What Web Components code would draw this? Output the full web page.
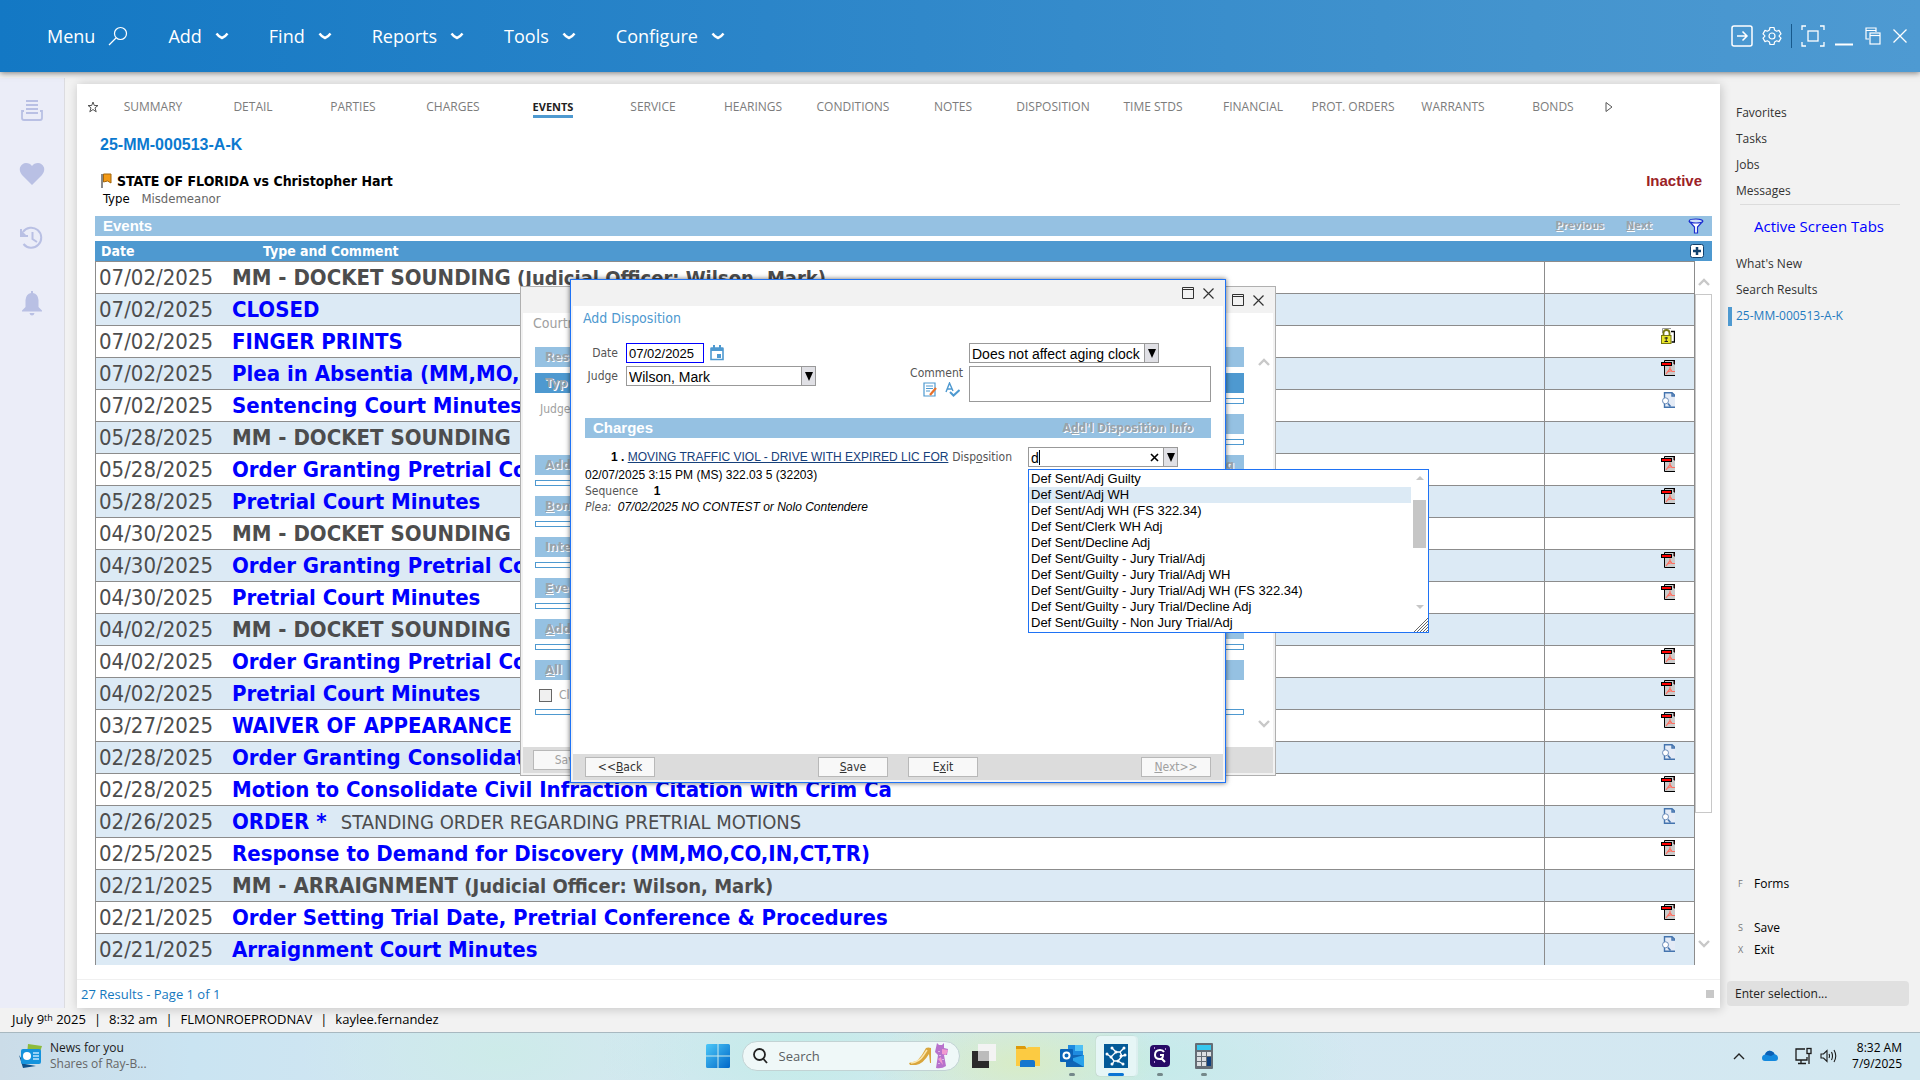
<!DOCTYPE html>
<html lang="en">
<head>
<meta charset="utf-8">
<title>25-MM-000513-A-K</title>
<style>
  :root {
    --blue: #4e99d0;
    --blue-light: #95c1e2;
    --row-alt: #dceaf5;
    --line: #8c8c8c;
    --ui: "Open Sans", "Noto Sans", sans-serif;
    --tahoma: "DejaVu Sans Condensed", "Noto Sans", sans-serif;
    --arial: "Liberation Sans", Arial, sans-serif;
  }
  html, body { height: 100%; margin: 0; }
  body { font-family: var(--ui); font-size: 12px; overflow: hidden; }
</style>
</head>
<body>
<court-app>
  <app-header slot="header"></app-header>
  <app-rail slot="rail"></app-rail>
  <case-panel slot="main" case-number="25-MM-000513-A-K" status="Inactive">
    <case-tabs slot="tabs" active="EVENTS"></case-tabs>
    <span slot="style">STATE OF FLORIDA vs Christopher Hart</span>
    <span slot="type">Misdemeanor</span>
    <events-table></events-table>
    <span slot="results">27 Results - Page 1 of 1</span>
  </case-panel>
  <side-nav slot="side"></side-nav>
  <status-bar slot="status"></status-bar>
  <task-bar slot="taskbar"></task-bar>
  <dialog-window slot="windows" class="minutes" inactive>
    <minutes-form></minutes-form>
    <action-button slot="actions" disabled>Save</action-button>
  </dialog-window>
  <dialog-window slot="windows" class="disposition">
    <disposition-form></disposition-form>
    <action-button slot="actions">&lt;&lt;<u>B</u>ack</action-button>
    <action-button slot="actions" class="save"><u>S</u>ave</action-button>
    <action-button slot="actions" class="exit">E<u>x</u>it</action-button>
    <action-button slot="actions" class="next" disabled><u>N</u>ext&gt;&gt;</action-button>
  </dialog-window>
</court-app>

<script>
/* Small base: every element sets its shadow root from a html() string */
class BaseElement extends HTMLElement {
  constructor() {
    super();
    this.attachShadow({ mode: 'open' });
  }

  connectedCallback() {
    this.shadowRoot.innerHTML = this.html();
  }
}

/* Page shell: header, three columns, status bar, taskbar, floating windows */
class CourtApp extends BaseElement {
  html() {
    return `
      <style>
        :host {
          display: flex;
          flex-direction: column;
          position: relative;
          height: 100vh;
          background: #f2f2f2;
        }
        .body {
          flex: 1;
          min-height: 0;
          display: grid;
          grid-template: minmax(0, 1fr) / 65px minmax(0, 1fr) 200px;
        }
        ::slotted(dialog-window) { position: absolute; }
        ::slotted(.minutes) { left: 520px; top: 286px; width: 756px; height: 490px; }
        ::slotted(.disposition) { left: 570px; top: 279px; width: 656px; height: 504px; }
      </style>
      <slot name="header"></slot>
      <div class="body">
        <slot name="rail"></slot>
        <slot name="main"></slot>
        <slot name="side"></slot>
      </div>
      <slot name="status"></slot>
      <slot name="taskbar"></slot>
      <slot name="windows"></slot>
    `;
  }
}

class AppHeader extends BaseElement {
  html() {
    const caret = '<svg width="14" height="8" viewBox="0 0 14 8"><path d="M1.500 1.500Q4 5 7 6Q10 5 12.500 1.500" fill="none" stroke="#fff" stroke-width="2.400"/></svg>';
    const items = ['Add', 'Find', 'Reports', 'Tools', 'Configure'];
    return `
      <style>
        :host {
          display: flex;
          align-items: center;
          justify-content: space-between;
          height: 72px;
          flex: none;
          padding: 0 12px 0 47px;
          background: linear-gradient(90deg, #1378c4, #2b85c9 40%, #4494ce 80%, #4e9ad2);
          box-shadow: 0 1px 6px rgba(0, 0, 0, .5);
          z-index: 1;
        }
        nav { display: flex; gap: 40px; }
        button {
          display: flex;
          align-items: center;
          padding: 0;
          border: 0;
          background: none;
          color: #fff;
          font: 18px/24px var(--ui);
        }
        nav button { gap: 13px; }
        .tools { display: flex; align-items: center; gap: 9px; }
        .tools i { width: 1px; height: 24px; background: #17598c; }
        svg { display: block; fill: none; stroke: #fff; }
      </style>
      <nav>
        <button>Menu
          <svg width="20" height="20" viewBox="0 0 20 20"><circle cx="12.500" cy="7.500" r="6" stroke-width="1.200"/><path d="M8 12L1 19" stroke-width="1.300"/></svg>
        </button>
        ${items.map(name => `<button>${name}${caret}</button>`).join('')}
      </nav>
      <div class="tools">
        <button aria-label="Open"><svg width="22" height="22" viewBox="0 0 22 22"><rect x="1" y="1" width="20" height="20" rx="2" stroke-width="1.500"/><path d="M6 11H16M11.500 6.500L16 11L11.500 15.500" stroke-width="1.500"/></svg></button>
        <button aria-label="Settings"><svg width="20" height="20" viewBox="0 0 20 20" stroke-width="1.200"><path d="M8 1.500H12L12.600 4L14.600 5.200L17 4.400L19 7.900L17.200 9.600V10.400L19 12.100L17 15.600L14.600 14.800L12.600 16L12 18.500H8L7.400 16L5.400 14.800L3 15.600L1 12.100L2.800 10.400V9.600L1 7.900L3 4.400L5.400 5.200L7.400 4Z" stroke-linejoin="round"/><circle cx="10" cy="10" r="3"/></svg></button>
        <i></i>
        <button aria-label="Full screen"><svg width="24" height="22" viewBox="0 0 24 22"><path d="M1 5V1H5M19 1H23V5M23 17V21H19M5 21H1V17" stroke-width="1.300"/><rect x="7" y="6" width="10" height="10" stroke-width="1.300"/></svg></button>
        <button aria-label="Minimize"><svg width="20" height="20" viewBox="0 0 20 20"><path d="M1 18.500H19" stroke-width="2"/></svg></button>
        <button aria-label="Restore"><svg width="20" height="18" viewBox="0 0 20 18" stroke-width="1.200"><path d="M6 12H3V1H13V5M3 3.500H13"/><rect x="7" y="6" width="10" height="11"/><path d="M7 8.500H17"/></svg></button>
        <button aria-label="Close"><svg width="16" height="16" viewBox="0 0 16 16"><path d="M1.500 1.500L14.500 14.500M14.500 1.500L1.500 14.500" stroke-width="1.300"/></svg></button>
      </div>
    `;
  }
}

class AppRail extends BaseElement {
  html() {
    return `
      <style>
        :host {
          display: flex;
          flex-direction: column;
          align-items: center;
          gap: 40px;
          box-sizing: border-box;
          margin-top: 6px;
          padding-top: 20px;
          background: #ebedf8;
          border-right: 1px solid #dcdce0;
        }
        button { padding: 0; border: 0; background: none; color: #b9c0e4; }
        svg { display: block; }
      </style>
      <button aria-label="Queue"><svg width="24" height="24" viewBox="0 0 24 24" fill="none" stroke="currentColor" stroke-width="2"><path d="M6 3H18M6 7H18M6 11H18M6 15H18"/><path d="M4 13H2V20Q2 22 4 22H20Q22 22 22 20V13H20" stroke-width="1.800"/></svg></button>
      <button aria-label="Favorites"><svg width="26" height="24" viewBox="0 0 26 24"><path d="M13 23L3 13Q0 9 1 5.500Q3 1 7 1Q11 1 13 4Q15 1 19 1Q23 1 25 5.500Q26 9 23 13Z" fill="currentColor"/></svg></button>
      <button aria-label="History"><svg width="26" height="24" viewBox="0 0 26 24" fill="none" stroke="currentColor" stroke-width="2"><path d="M4 6A10 10 0 1 1 4.500 18M2 3V10H9M13.500 6V13L18 16"/><path d="M1 3V10H8Z" fill="currentColor" stroke="none"/></svg></button>
      <button aria-label="Alerts"><svg width="24" height="26" viewBox="0 0 24 26" fill="currentColor"><path d="M11 1H13V3Q18 4 18.500 10V17L22 20.500V21.500H2V20.500L5.500 17V10Q6 4 11 3ZM9.500 23H14.500Q14 25.500 12 25.500Q10 25.500 9.500 23Z"/></svg></button>
    `;
  }
}

/* White case sheet: tabs, caption, slotted content and result count */
class CasePanel extends BaseElement {
  html() {
    return `
      <style>
        :host {
          display: flex;
          flex-direction: column;
          min-width: 0;
          margin: 12px 0 0 12px;
          background: #fff;
          box-shadow: 1px 1px 10px rgba(0, 0, 0, .2);
        }
        .number { margin: 4px 0 0 23px; font: bold 16px/24px var(--arial); }
        .number a { color: #0b79cf; text-decoration: none; }
        .caption {
          display: flex;
          justify-content: space-between;
          align-items: center;
          padding: 15px 18px 0 23px;
        }
        h1 { display: flex; align-items: center; gap: 5px; margin: 0; font: bold 14px/18px var(--tahoma); }
        .status { color: #9b2226; font: bold 15px/18px var(--arial); }
        .type { padding: 0 26px 9px; font: 13px/17px var(--tahoma); }
        .type ::slotted(span) { margin-left: 8px; color: #666; }
        .content { flex: 1; min-height: 0; display: flex; padding: 0 8px 0 18px; }
        ::slotted(events-table) { flex: 1; min-width: 0; }
        footer {
          display: flex;
          align-items: center;
          justify-content: space-between;
          height: 28px;
          margin-top: 13px;
          padding: 0 6px 0 4px;
          border-top: 1px solid #f0f0f0;
          color: #1478be;
          font-size: 13px;
        }
        footer i { width: 8px; height: 8px; background: #c8c8c8; }
      </style>
      <slot name="tabs"></slot>
      <div class="number"><a href="#case">${this.getAttribute('case-number')}</a></div>
      <div class="caption">
        <h1>
          <svg width="12" height="16" viewBox="0 0 12 16"><path d="M2 1V15" stroke="#888" stroke-width="2"/><path d="M3.500 1H11V10L7.500 8L3.500 9Z" fill="#f39a16" stroke="#a4660c"/></svg>
          <slot name="style"></slot>
        </h1>
        <span class="status">${this.getAttribute('status')}</span>
      </div>
      <div class="type">Type <slot name="type"></slot></div>
      <div class="content"><slot></slot></div>
      <footer><slot name="results"></slot><i></i></footer>
    `;
  }
}

class CaseTabs extends BaseElement {
  html() {
    const tabs = ['SUMMARY', 'DETAIL', 'PARTIES', 'CHARGES', 'EVENTS', 'SERVICE', 'HEARINGS', 'CONDITIONS',
      'NOTES', 'DISPOSITION', 'TIME STDS', 'FINANCIAL', 'PROT. ORDERS', 'WARRANTS', 'BONDS'];
    const active = this.getAttribute('active');
    return `
      <style>
        :host { display: flex; align-items: center; height: 45px; padding-left: 10px; }
        nav { display: flex; margin: 0 2px 0 4px; }
        nav span { width: 100px; text-align: center; }
        a { color: #7c7c7c; text-decoration: none; font: 12px/16px var(--ui); white-space: nowrap; }
        a.active { padding-bottom: 1px; color: #222; font-weight: bold; font-size: 11px; border-bottom: 3px solid var(--blue); }
        svg { display: block; fill: none; stroke: #555; }
      </style>
      <svg width="12" height="12" viewBox="0 0 12 12"><path d="M6 1L7.300 4.500H11L8 6.800L9.200 10.800L6 8.500L2.800 10.800L4 6.800L1 4.500H4.700Z"/></svg>
      <nav>
        ${tabs.map(t => `<span><a href="#${t.toLowerCase()}"${t === active ? ' class="active"' : ''}>${t}</a></span>`).join('')}
      </nav>
      <svg width="8" height="12" viewBox="0 0 8 12"><path d="M1 1.500L7 6L1 10.500Z"/></svg>
    `;
  }
}

const FILE_ICONS = {
  pdf: '<svg width="14" height="16" viewBox="0 0 14 16"><path d="M3.500 .5H14V15.500H3.500Z" fill="#cbcbcb"/><path d="M14 .5H3.500V15.500H14" fill="none" stroke="#000"/><path d="M13 1V4H14V1Z" fill="#f00" stroke="#000"/><rect x=".5" y="2.500" width="10" height="3" fill="#f00" stroke="#000"/><path d="M5 14L9 8.500V6.500M9 8.500L11 11.500H14M6.500 12L11 10.500" fill="none" stroke="#ff6f61" stroke-width="1.200"/></svg>',
  doc: '<svg width="14" height="16" viewBox="0 0 14 16"><path d="M3.500 .7H11L14 3.500V15.300H3.500Z" fill="#e4ebf6"/><path d="M3.500 6V.7H11L14 3.500M3.500 11V15.300H14M11 .7V4H14" fill="none" stroke="#4474ae" stroke-width="1.400"/><circle cx="4.500" cy="8.800" r="3" fill="#fff" stroke="#6f8fba"/><path d="M7 11.500L9.500 14.500" stroke="#4474ae" stroke-width="1.600"/></svg>',
  lock: '<svg width="14" height="16" viewBox="0 0 14 16"><path d="M2 1H11L13.500 3.500V14H9" fill="#fff"/><path d="M1.500 5V.5H10" fill="none" stroke="#999"/><path d="M10 3.500H13.500V14H10.500" fill="none" stroke="#000" stroke-width="1.400"/><path d="M2.500 7V5Q2.500 2 5.500 2Q8.500 2 8.500 5V7" fill="none" stroke="#77770f" stroke-width="1.800"/><rect x=".5" y="7.500" width="9.500" height="8" fill="#e8e52a" stroke="#77770f"/><path d="M5.200 9V14M3.500 10H7M3.500 13.500H7" stroke="#222"/></svg>'
};

const OFFICER = '(Judicial Officer: Wilson, Mark)';

/* date, title, kind, file icon, trailing comment */
const EVENTS = [
  ['07/02/2025', 'MM - DOCKET SOUNDING', 'hearing', '', OFFICER],
  ['07/02/2025', 'CLOSED', 'event', ''],
  ['07/02/2025', 'FINGER PRINTS', 'event', 'lock'],
  ['07/02/2025', 'Plea in Absentia (MM,MO,C', 'event', 'pdf'],
  ['07/02/2025', 'Sentencing Court Minutes', 'event', 'doc'],
  ['05/28/2025', 'MM - DOCKET SOUNDING', 'hearing', ''],
  ['05/28/2025', 'Order Granting Pretrial Co', 'event', 'pdf'],
  ['05/28/2025', 'Pretrial Court Minutes', 'event', 'pdf'],
  ['04/30/2025', 'MM - DOCKET SOUNDING', 'hearing', ''],
  ['04/30/2025', 'Order Granting Pretrial Co', 'event', 'pdf'],
  ['04/30/2025', 'Pretrial Court Minutes', 'event', 'pdf'],
  ['04/02/2025', 'MM - DOCKET SOUNDING', 'hearing', ''],
  ['04/02/2025', 'Order Granting Pretrial Co', 'event', 'pdf'],
  ['04/02/2025', 'Pretrial Court Minutes', 'event', 'pdf'],
  ['03/27/2025', 'WAIVER OF APPEARANCE', 'event', 'pdf'],
  ['02/28/2025', 'Order Granting Consolidat', 'event', 'doc'],
  ['02/28/2025', 'Motion to Consolidate Civil Infraction Citation with Crim Ca', 'event', 'pdf'],
  ['02/26/2025', 'ORDER *', 'event', 'doc', 'STANDING ORDER REGARDING PRETRIAL MOTIONS'],
  ['02/25/2025', 'Response to Demand for Discovery (MM,MO,CO,IN,CT,TR)', 'event', 'pdf'],
  ['02/21/2025', 'MM - ARRAIGNMENT', 'hearing', '', OFFICER],
  ['02/21/2025', 'Order Setting Trial Date, Pretrial Conference &amp; Procedures', 'event', 'pdf'],
  ['02/21/2025', 'Arraignment Court Minutes', 'event', 'doc']
];

class EventsTable extends BaseElement {
  _row([date, title, kind, icon, note]) {
    const name = kind === 'event' ? `<a href="#event">${title}</a>` : `<b>${title}</b>`;
    return `
      <tr class="${kind}">
        <td class="date">${date}</td>
        <td class="title">${name}${note ? ` <span class="note">${note}</span>` : ''}</td>
        <td class="file">${FILE_ICONS[icon] || ''}</td>
      </tr>`;
  }

  html() {
    return `
      <style>
        :host { display: flex; flex-direction: column; }
        .bar, .head {
          display: flex;
          align-items: center;
          height: 20px;
          flex: none;
          color: #fff;
        }
        .bar { padding: 0 8px; background: var(--blue-light); margin-bottom: 5px; }
        h2 { flex: 1; margin: 0; font: bold 15px/20px var(--arial); }
        .bar button {
          padding: 0;
          border: 0;
          background: none;
          color: #9aa3ab;
          font: bold 11px/20px var(--tahoma);
          text-shadow: 1px 1px #fff;
        }
        .bar button + button { margin-left: 22px; }
        .bar button.filter { margin-left: 36px; }
        .head { padding: 0 8px 0 6px; background: var(--blue); font: bold 14px/20px var(--tahoma); }
        .head span:first-child { width: 162px; }
        .head span:nth-child(2) { flex: 1; }
        .head button { padding: 0; border: 0; background: none; }
        svg { display: block; }
        .scroll { flex: 1; min-height: 0; display: flex; overflow: hidden; }
        .rows { flex: 1; overflow: hidden; }
        table {
          width: 100%;
          border-collapse: separate;
          border-spacing: 0;
          border: 1px solid var(--line);
          border-width: 0 1px;
          table-layout: fixed;
          font: 22px/26px var(--tahoma);
          color: #4d4d4d;
        }
        td {
          box-sizing: border-box;
          height: 32px;
          padding: 0;
          border-top: 1px solid var(--line);
          white-space: nowrap;
          overflow: hidden;
        }
        tr:nth-child(even) { background: var(--row-alt); }
        .date { width: 136px; padding-left: 3px; }
        .title a { color: #00f; font-weight: bold; text-decoration: none; }
        .note { font-size: 20px; font-weight: bold; }
        .event .note { margin-left: 8px; font-weight: normal; }
        .file { width: 150px; padding-right: 19px; border-left: 1px solid var(--line); vertical-align: top; }
        .file svg { margin: 2px 0 0 auto; }
        .track { width: 17px; flex: none; display: flex; flex-direction: column; align-items: center; }
        .track svg { margin: 17px 0 8px; }
        .thumb { box-sizing: border-box; width: 17px; height: 519px; border: 1px solid #c8c8c8; background: #fff; }
        .track svg:last-child { margin: auto 0 18px; }
      </style>
      <div class="bar">
        <h2>Events</h2>
        <button disabled><u>P</u>revious</button>
        <button disabled><u>N</u>ext</button>
        <button class="filter" aria-label="Filter"><svg width="16" height="16" viewBox="0 0 16 16"><path d="M1 3L6.500 9V15H9.500V9L15 3" fill="#fff" stroke="#1c2fd0" stroke-width="1.200"/><ellipse cx="8" cy="3" rx="6.800" ry="2" fill="#cfe0f8" stroke="#1c2fd0" stroke-width="1.200"/></svg></button>
      </div>
      <div class="head">
        <span>Date</span><span>Type and Comment</span>
        <button aria-label="Add event"><svg width="14" height="14" viewBox="0 0 14 14"><rect x=".5" y=".5" width="13" height="13" rx="2" fill="#fff" stroke="#11416d"/><path d="M7 3V11M3 7H11" stroke="#11416d" stroke-width="2.500"/></svg></button>
      </div>
      <div class="scroll">
        <div class="rows"><table><tbody>${EVENTS.map(e => this._row(e)).join('')}</tbody></table></div>
        <div class="track">
          <svg width="12" height="8" viewBox="0 0 12 8"><path d="M1 7L6 2L11 7" fill="none" stroke="#c8c8c8" stroke-width="2.400"/></svg>
          <div class="thumb"></div>
          <svg width="12" height="8" viewBox="0 0 12 8"><path d="M1 1L6 6L11 1" fill="none" stroke="#c8c8c8" stroke-width="2.400"/></svg>
        </div>
      </div>
    `;
  }
}

class SideNav extends BaseElement {
  html() {
    return `
      <style>
        :host { display: flex; flex-direction: column; min-width: 0; padding: 28px 11px 2px 7px; font-size: 12px; }
        a { color: #333; text-decoration: none; line-height: 26px; padding-left: 9px; }
        nav { display: flex; flex-direction: column; }
        hr { width: 160px; margin: 0 0 0 13px; border: 0; border-top: 1px solid #dcdcdc; }
        h3 { margin: 8px 0 12px 27px; color: #00f; font: 15px/26px var(--ui); }
        .current { display: flex; align-items: center; gap: 4px; padding-left: 1px; color: #1f7ac0; }
        .current i { width: 4px; height: 19px; background: var(--blue); }
        .keys { margin-top: auto; color: #000; }
        .keys a { display: flex; line-height: 22px; color: #000; padding-left: 11px; }
        .keys kbd { width: 16px; color: #777; font: 9px/22px var(--ui); }
        .keys a:first-child { margin-bottom: 22px; }
        input {
          box-sizing: border-box;
          width: 100%;
          height: 25px;
          margin-top: 20px;
          padding: 0 8px;
          border: 0;
          border-radius: 4px;
          background: #e0e0e0;
          font: 12px var(--ui);
        }
        input::placeholder { color: #222; opacity: 1; }
      </style>
      <nav>
        <a href="#favorites">Favorites</a>
        <a href="#tasks">Tasks</a>
        <a href="#jobs">Jobs</a>
        <a href="#messages">Messages</a>
      </nav>
      <hr>
      <h3>Active Screen Tabs</h3>
      <nav>
        <a href="#new">What's New</a>
        <a href="#results">Search Results</a>
        <a href="#case" class="current"><i></i>25-MM-000513-A-K</a>
      </nav>
      <div class="keys">
        <a href="#forms"><kbd>F</kbd>Forms</a>
        <a href="#save"><kbd>S</kbd>Save</a>
        <a href="#exit"><kbd>X</kbd>Exit</a>
      </div>
      <input type="text" aria-label="Enter selection" placeholder="Enter selection...">
    `;
  }
}

class StatusBar extends BaseElement {
  html() {
    return `
      <style>
        :host {
          display: flex;
          align-items: center;
          flex: none;
          box-sizing: border-box;
          height: 24px;
          padding: 0 0 2px 12px;
          color: #000;
          font-size: 13px;
        }
        span { line-height: 22px; }
        span + span::before { content: "|"; margin: 0 8px; }
        sup { font-size: 9px; line-height: 1; vertical-align: 3px; }
      </style>
      <span>July 9<sup>th</sup> 2025</span><span>8:32 am</span><span>FLMONROEPRODNAV</span><span>kaylee.fernandez</span>
    `;
  }
}

class TaskBar extends BaseElement {
  html() {
    return `
      <style>
        :host {
          display: grid;
          grid-template-columns: 1fr auto 1fr;
          align-items: center;
          box-sizing: border-box;
          flex: none;
          height: 48px;
          padding: 0 18px 1px 19px;
          border-top: 1px solid #a8b8c0;
          background:
            radial-gradient(150px 60px at 1020px 30px, #d8ecc6, transparent),
            radial-gradient(200px 90px at 800px 20px, #c3ece8, transparent),
            radial-gradient(220px 90px at 1140px 30px, #c4ebe9, transparent),
            radial-gradient(200px 90px at 500px 20px, #cdebe9, transparent),
            linear-gradient(90deg, #cbdce8, #cae4f2 10%, #d5e7f2 30%, #d3e8f1);
        }
        svg { display: block; }
        button { padding: 0; border: 0; background: none; font: 12px/16px var(--ui); }
        .news { display: flex; align-items: center; gap: 8px; justify-self: start; text-align: left; color: #1b1b1b; }
        .news small { display: block; font-size: 12px; color: #666; }
        .apps { display: flex; align-items: center; gap: 4px; }
        .apps button { display: flex; justify-content: center; align-items: center; width: 40px; height: 40px; position: relative; border-radius: 4px; }
        .apps .running::after {
          content: "";
          position: absolute;
          bottom: 0;
          width: 6px;
          height: 3px;
          border-radius: 2px;
          background: #74888a;
        }
        .apps .active { background: #e6f6f6; box-shadow: 2px 0 0 #dcefef, 0 0 1px #999; }
        .apps .active::after { width: 16px; background: #0a74d4; }
        label {
          box-sizing: border-box;
          display: flex;
          align-items: center;
          width: 218px;
          height: 30px;
          padding: 0 10px;
          border: 1px solid #c2d3d4;
          border-radius: 15px;
          background: #eff8f8;
        }
        label input { flex: 1; min-width: 0; padding: 0 0 0 11px; border: 0; background: none; font: 13px var(--ui); }
        label input::placeholder { color: #5b6063; opacity: 1; }
        .tray { display: flex; align-items: center; justify-self: end; color: #1b1b1b; }
        .tray > * { margin-left: 8px; }
        .clock { min-width: 57px; text-align: right; }
      </style>
      <button class="news">
        <svg width="23" height="24" viewBox="0 0 23 24"><path d="M9 0L23 2L19 14L8 10Z" fill="#8dbb3c"/><path d="M0 11L6 20L17 22L4 24Z" fill="#0c4f8a"/><rect x="2" y="5" width="20" height="15" rx="2" fill="#1593dd"/><circle cx="8" cy="12" r="4" fill="#fff"/><path d="M14 9H20M14 12H20M14 15H20" stroke="#bfe6ff" stroke-width="1.500"/></svg>
        <span>News for you<small>Shares of Ray-B...</small></span>
      </button>
      <div class="apps">
        <button aria-label="Start"><svg width="24" height="24" viewBox="0 0 24 24"><defs><linearGradient id="w" x2="1" y2="1"><stop stop-color="#4cc8f8"/><stop offset="1" stop-color="#0067c8"/></linearGradient></defs><path d="M0 1.500Q0 0 1.500 0H11.500V11.500H0ZM12.500 0H22.500Q24 0 24 1.500V11.500H12.500ZM0 12.500H11.500V24H1.500Q0 24 0 22.500ZM12.500 12.500H24V22.500Q24 24 22.500 24H12.500Z" fill="url(#w)"/></svg></button>
        <label>
          <svg width="15" height="16" viewBox="0 0 15 16" fill="none" stroke="#222" stroke-width="1.800"><circle cx="6.500" cy="6.500" r="5.500"/><path d="M10.500 11L14 15"/></svg>
          <input type="text" aria-label="Search" placeholder="Search">
          <svg width="40" height="26" viewBox="0 0 40 26"><path d="M0 20Q4 19 8 18Q13 13 17 5Q19 4 22 5L22 20H21L20 11Q14 21 7 22H1Z" fill="#d9a63c"/><path d="M2 20Q10 19 14 13L18 7" fill="none" stroke="#fbe6ac" stroke-width="1.500"/><path d="M28 0L30 2H33L35 0L35 5L39 6L38 12L35 12L37 23Q33 26 27 25L29 12L26 9Z" fill="#b772cc"/><path d="M33 6L39 7L37 12L33 11ZM29 16L32 14L34 22Z" fill="#f09ad0"/><path d="M30 8V9M31 12V13M30 20V21M34 16V17" stroke="#fff"/></svg>
        </label>
        <button aria-label="Task view"><svg width="24" height="24" viewBox="0 0 24 24"><rect x="0" y="7" width="17" height="17" fill="#2a2a2a"/><rect x="6" y="0" width="18" height="17" fill="#f3f3f3"/><rect x="6" y="7" width="11" height="10" fill="#bcbcbc"/></svg></button>
        <button aria-label="File Explorer"><svg width="24" height="24" viewBox="0 0 24 24"><path d="M0 2H9L11 5V8H0Z" fill="#dd9a0a"/><path d="M0 5H10L12 3H24V22H0Z" fill="#fccb42"/><path d="M4 23V18Q4 16 6 16H17Q19 16 19 18V23Z" fill="#1577cf"/></svg></button>
        <button class="running" aria-label="Outlook"><svg width="24" height="24" viewBox="0 0 24 24"><path d="M8 1H23V12H8Z" fill="#1e8be0"/><path d="M15 1H23V7H15Z" fill="#4fc0f5"/><path d="M6 11L24 11V23H6Z" fill="#1066b6"/><path d="M24 11V23L10 15Z" fill="#2aa2ea"/><rect x="0" y="5" width="13" height="13" rx="1" fill="#0a63b8"/><circle cx="6.500" cy="11.500" r="3" fill="none" stroke="#fff" stroke-width="2"/></svg></button>
        <button class="running active" aria-label="Case manager"><svg width="24" height="24" viewBox="0 0 24 24"><rect width="24" height="24" fill="#035a97"/><g fill="none" stroke="#fff" stroke-width="1.300"><path d="M3 10L7 13L12 8L8 4M12 8L16 8L20 4M16 8L18 12L22 11M18 12L14 17L19 20M14 17L10 17L7 13M10 17L8 21"/></g><g fill="#fff"><circle cx="3" cy="10" r="1.500"/><circle cx="8" cy="4" r="1.500"/><circle cx="12" cy="8" r="1.500"/><circle cx="7" cy="13" r="1.500"/><circle cx="20" cy="4" r="1.500"/><circle cx="21" cy="11" r="1.500"/><circle cx="17" cy="12" r="1.500"/><circle cx="14" cy="17" r="1.500"/><circle cx="19" cy="20" r="1.500"/><circle cx="8" cy="20" r="1.500"/></g></svg></button>
        <button class="running" aria-label="Capture"><svg width="20" height="22" viewBox="0 0 20 22"><rect width="20" height="22" rx="4" fill="#270a66"/><path d="M14 7Q13 5 10 5Q5 5 5 10Q5 14 10 14Q13 14 13 10H10M12 14L15 17" fill="none" stroke="#fff" stroke-width="2"/><path d="M4 3H5M15 4H16M4 17H5" stroke="#e7b8ff" stroke-width="1.500"/></svg></button>
        <button class="running" aria-label="Calculator"><svg width="18" height="26" viewBox="0 0 18 26"><rect width="18" height="26" rx="1" fill="#656d75"/><rect x="2" y="2" width="14" height="5" fill="#37c7ee"/><path d="M2 9H6V13H2ZM7 9H11V13H7ZM12 9H16V13H12ZM2 14H6V18H2ZM7 14H11V18H7ZM2 19H6V23H2ZM7 19H11V23H7Z" fill="#dcdfe2"/><path d="M12 14H16V23H12Z" fill="#0f3f7d"/></svg></button>
      </div>
      <div class="tray">
        <svg width="12" height="8" viewBox="0 0 12 8"><path d="M1 7L6 2L11 7" fill="none" stroke="#222" stroke-width="1.400"/></svg>
        <svg width="34" height="12" viewBox="-9 0 34 12"><path d="M3 11Q0 11 0 8Q0 5 3 4.500Q5 0 9 1Q12 2 12.500 4Q16 5 16 8Q16 11 13 11Z" fill="#1389de"/><path d="M3 4.500Q5 0 9 1Q12 2 12.500 4L9 6Z" fill="#0b5fb4"/></svg>
        <svg width="17" height="18" viewBox="0 0 17 18" fill="none" stroke="#1b1b1b" stroke-width="1.300"><path d="M10 2H1V13H12V10M6 13V16M3 16.500H11"/><rect x="12" y="1.500" width="4" height="5"/><path d="M14 7V17"/></svg>
        <svg width="17" height="14" viewBox="0 0 17 14" fill="none" stroke="#1b1b1b" stroke-width="1.100"><path d="M1 5H3.500L7 1.500V12.500L3.500 9H1ZM9 5Q10 7 9 9M11.500 3Q13.500 7 11.500 11M14 1Q17.500 7 14 13"/></svg>
        <button class="clock">8:32 AM<br>7/9/2025</button>
      </div>
    `;
  }
}

/* Window frame with caption buttons, a slotted body and a strip of actions */
class DialogWindow extends BaseElement {
  html() {
    return `
      <style>
        :host {
          display: flex;
          flex-direction: column;
          box-sizing: border-box;
          border: 1px solid #1f73f5;
          background: #f2f2f2;
          box-shadow: 0 0 5px rgba(0, 0, 0, .6);
        }
        :host([inactive]) { border-color: #b0b0b0; box-shadow: none; }
        header { display: flex; justify-content: flex-end; align-items: center; gap: 9px; height: 26px; flex: none; padding-right: 11px; }
        header button { padding: 0; border: 0; background: none; }
        svg { display: block; fill: none; stroke: #333; }
        .body { flex: 1; min-height: 0; margin: 0 2px; background: #fff; }
        footer { display: flex; flex: none; height: 20px; padding: 3px 12px; margin: 0 2px 2px; background: #dcdcdc; }
        :host([inactive]) footer { padding: 3px 10px; }
        ::slotted(.save) { margin-left: auto; }
        ::slotted(.exit) { margin: 0 auto 0 20px; }
      </style>
      <header>
        <button aria-label="Maximize"><svg width="12" height="12" viewBox="0 0 12 12"><path d="M.5 .5H11.500V11.500H.5ZM.5 2.500H11.500"/></svg></button>
        <button aria-label="Close"><svg width="11" height="11" viewBox="0 0 11 11"><path d="M.5 .5L10.500 10.500M10.500 .5L.5 10.500" stroke-width="1.200"/></svg></button>
      </header>
      <div class="body"><slot></slot></div>
      <footer><slot name="actions"></slot></footer>
    `;
  }
}

class ActionButton extends BaseElement {
  html() {
    return `
      <style>
        :host { display: block; }
        button {
          display: block;
          width: 70px;
          height: 20px;
          padding: 0;
          border: 1px solid #b8b8b8;
          background: #f8f8f8;
          color: #333;
          font: 12px/18px var(--tahoma);
        }
        button:disabled { color: #a0a0a0; }
      </style>
      <button${this.hasAttribute('disabled') ? ' disabled' : ''}><slot></slot></button>
    `;
  }
}

/* Greyed form that sits under the active window */
class MinutesForm extends BaseElement {
  html() {
    const section = label => `<h3><span>${label}</span></h3><hr>`;
    return `
      <style>
        :host { display: grid; grid-template-columns: 1fr 20px; height: 100%; font-family: var(--tahoma); }
        .form { padding: 0 9px 0 12px; overflow: hidden; }
        h2 { margin: 0 0 14px -2px; color: #a0a0a0; font: 14px/20px var(--tahoma); }
        h3 {
          margin: 0 0 5px;
          padding: 0 10px;
          display: flex;
          justify-content: space-between;
          background: var(--blue-light);
          color: #9aa3ab;
          font: bold 13px/20px var(--tahoma);
          text-shadow: 1px 1px #fff;
        }
        h3.dark { background: var(--blue); }
        hr { box-sizing: border-box; height: 6px; margin: 0 0 10px; border: 1px solid var(--blue); background: #fff; }
        .cols { display: grid; grid-template-columns: 1fr 1fr; height: 82px; margin-top: 6px; color: #a0a0a0; }
        .cols div { padding: 4px 5px; }
        label { display: flex; align-items: center; gap: 7px; height: 20px; margin-bottom: 4px; padding-left: 4px; color: #a0a0a0; }
        input { appearance: none; box-sizing: border-box; width: 13px; height: 13px; margin: 0; border: 1px solid #666; background: #f0f0f0; }
        .track { display: flex; flex-direction: column; justify-content: space-between; align-items: flex-end; padding: 45px 3px 19px; }
      </style>
      <div class="form">
        <h2>Courtr</h2>
        <h3>Res</h3>
        <div class="cols">
          <section><h3 class="dark">Typ</h3><div>Judge</div></section>
          <section><h3 class="dark">&nbsp;</h3><hr><h3>&nbsp;</h3><hr></section>
        </div>
        <h3><span>Add</span><span>g</span></h3><hr>
        ${section('<u>B</u>on')}
        ${section('Inter')}
        ${section('<u>E</u>ve')}
        ${section('<u>A</u>dd')}
        <h3><span><u>A</u>ll</span></h3>
        <label><input type="checkbox" disabled>Cl</label>
        <hr>
      </div>
      <div class="track">
        <svg width="12" height="8" viewBox="0 0 12 8"><path d="M1 7L6 2L11 7" fill="none" stroke="#c8c8c8" stroke-width="2.400"/></svg>
        <svg width="12" height="8" viewBox="0 0 12 8"><path d="M1 1L6 6L11 1" fill="none" stroke="#c8c8c8" stroke-width="2.400"/></svg>
      </div>
    `;
  }
}

class DispositionForm extends BaseElement {
  html() {
    const arrow = '<i><svg width="8" height="9" viewBox="0 0 8 9"><path d="M0 0H8L4 9Z" fill="#000"/></svg></i>';
    return `
      <style>
        :host { display: block; padding: 0 12px; color: #555; font: 12px/20px var(--tahoma); }
        h2 { margin: 0 0 13px -2px; color: var(--blue); font: 14px/24px var(--tahoma); }
        .fields { display: flex; justify-content: space-between; margin-bottom: 16px; }
        .group { display: grid; grid-template-columns: 33px auto; gap: 3px 8px; align-content: start; }
        .group > label { text-align: right; }
        .group.right { grid-template-columns: auto 242px; gap: 3px 6px; }
        .line { display: flex; align-items: center; gap: 6px; }
        input, select, textarea { box-sizing: border-box; min-width: 0; margin: 0; color: #000; font: 14px var(--arial); }
        .date { width: 78px; height: 20px; padding: 0 2px; border: 1px solid #00f; font-size: 13px; }
        .combo { box-sizing: border-box; display: flex; width: 190px; height: 20px; border: 1px solid #999; background: #fff; }
        .combo select, .combo input { flex: 1; padding: 1px 0 0 2px; border: 0; background: none; appearance: none; outline: 0; }
        .combo i { display: flex; align-items: center; justify-content: center; width: 13px; border-left: 1px solid #999; background: #e0e0e5; }
        textarea { width: 100%; height: 36px; border: 1px solid #999; resize: none; display: block; }
        .comment { display: flex; flex-direction: column; align-items: flex-end; line-height: 14px; }
        .comment span { display: flex; gap: 8px; padding: 2px 3px 0 0; }
        svg { display: block; }
        .bar {
          display: flex;
          justify-content: space-between;
          height: 20px;
          margin-bottom: 9px;
          padding: 0 18px 0 8px;
          background: var(--blue-light);
        }
        h3 { margin: 0; color: #fff; font: bold 15px/20px var(--arial); }
        .bar button { padding: 0; border: 0; background: none; color: #9aa3ab; font: bold 12px/20px var(--tahoma); text-shadow: 1px 1px #fff; }
        .charge { display: grid; grid-template-columns: minmax(0, 1fr) auto 183px; column-gap: 16px; align-items: start; }
        .info { color: #000; font: 12px/16px var(--arial); white-space: nowrap; }
        .info div:first-child { padding-left: 26px; line-height: 20px; }
        .info a { color: #17407a; }
        .info span { margin-right: 12px; color: #555; font-family: var(--tahoma); }
        .info em span { margin-right: 3px; }
        .picker { position: relative; }
        .picker .combo { width: 150px; }
        .picker button { padding: 0 4px; border: 0; background: none; }
        /* text cursor after the typed letter */
        .picker input { caret-color: transparent; background: linear-gradient(#000, #000) 10px 2px / 1px 15px no-repeat; }
        .list {
          position: absolute;
          top: 22px;
          left: 0;
          box-sizing: border-box;
          display: flex;
          width: 401px;
          height: 164px;
          border: 1px solid #1f73f5;
          background: #fff;
          color: #000;
          font: 13px/16px var(--arial);
          overflow: hidden;
        }
        ul { flex: 1; margin: 0; padding: 1px 0 0; list-style: none; white-space: nowrap; }
        li { padding-left: 2px; }
        .current { background: var(--row-alt); }
        .track { display: flex; flex-direction: column; align-items: center; width: 17px; }
        .track b { width: 13px; height: 48px; margin: 20px 0 57px; background: #c6c6c6; }
        .track svg:first-child { margin-top: 6px; }
        .track svg:last-child { margin: auto 0 0 auto; }
      </style>
      <h2>Add Disposition</h2>
      <div class="fields">
        <div class="group">
          <label for="date">Date</label>
          <div class="line">
            <input id="date" class="date" type="text" value="07/02/2025">
            <svg width="14" height="16" viewBox="0 0 14 16"><path d="M1 3.500Q1 3 1.500 3H12.500Q13 3 13 3.500V14.500H1Z" fill="#fff" stroke="#4e99d0" stroke-width="1.600"/><path d="M1 3H13V6H1ZM3 0H5V3H3ZM9 0H11V3H9Z" fill="#4e99d0"/><path d="M7 9H11V13H7Z" fill="#4e99d0"/></svg>
          </div>
          <label for="judge">Judge</label>
          <div class="combo"><select id="judge"><option>Wilson, Mark</option></select>${arrow}</div>
        </div>
        <div class="group right">
          <span></span>
          <div class="combo"><select aria-label="Aging clock"><option>Does not affect aging clock</option></select>${arrow}</div>
          <div class="comment">
            <label for="comment">Comment</label>
            <span>
              <svg width="14" height="15" viewBox="0 0 14 15"><path d="M1 1H12V14H1Z" fill="#fff" stroke="#4e99d0" stroke-width="1.200"/><path d="M3 4H10M3 6.500H10M3 9H7" stroke="#4e99d0"/><path d="M13 6L7 13" stroke="#e8702a" stroke-width="2.200"/></svg>
              <svg width="15" height="15" viewBox="0 0 15 15" fill="none" stroke="#4e99d0"><path d="M1 10L4.500 1L8 9M2 7H7" stroke-width="1.400"/><path d="M5 10L8.500 13.500L14.500 8" stroke-width="2"/></svg>
            </span>
          </div>
          <textarea id="comment"></textarea>
        </div>
      </div>
      <div class="bar"><h3>Charges</h3><button disabled>A<u>d</u>d'l Disposition Info</button></div>
      <div class="charge">
        <div class="info">
          <div><b>1 .</b> <a href="#charge">MOVING TRAFFIC VIOL - DRIVE WITH EXPIRED LIC FOR</a></div>
          <div>02/07/2025 3:15 PM (MS) 322.03 5 (32203)</div>
          <div><span>Sequence</span> <b>1</b></div>
          <div><em><span>Plea:</span> 07/02/2025 NO CONTEST or Nolo Contendere</em></div>
        </div>
        <label for="disp">Disp<u>o</u>sition</label>
        <div class="picker">
          <div class="combo">
            <input id="disp" type="text" value="d">
            <button aria-label="Clear"><svg width="9" height="9" viewBox="0 0 9 9"><path d="M1 1L8 8M8 1L1 8" stroke="#000" stroke-width="1.600"/></svg></button>
            ${arrow}
          </div>
          <div class="list">
            <ul role="listbox">
              <li role="option">Def Sent/Adj Guilty</li>
              <li role="option" class="current">Def Sent/Adj WH</li>
              <li role="option">Def Sent/Adj WH (FS 322.34)</li>
              <li role="option">Def Sent/Clerk WH Adj</li>
              <li role="option">Def Sent/Decline Adj</li>
              <li role="option">Def Sent/Guilty - Jury Trial/Adj</li>
              <li role="option">Def Sent/Guilty - Jury Trial/Adj WH</li>
              <li role="option">Def Sent/Guilty - Jury Trial/Adj WH (FS 322.34)</li>
              <li role="option">Def Sent/Guilty - Jury Trial/Decline Adj</li>
              <li role="option">Def Sent/Guilty - Non Jury Trial/Adj</li>
            </ul>
            <div class="track">
              <svg width="8" height="4" viewBox="0 0 8 4"><path d="M0 4L4 0L8 4Z" fill="#c6c6c6"/></svg>
              <b></b>
              <svg width="8" height="4" viewBox="0 0 8 4"><path d="M0 0L4 4L8 0Z" fill="#c6c6c6"/></svg>
              <svg width="14" height="14" viewBox="0 0 14 14"><path d="M0 14L14 0M3 14L14 3M6 14L14 6M9 14L14 9M12 14L14 12" stroke="#666"/></svg>
            </div>
          </div>
        </div>
      </div>
    `;
  }

  connectedCallback() {
    super.connectedCallback();
    this.shadowRoot.getElementById('disp').focus({ preventScroll: true });
  }
}

customElements.define('court-app', CourtApp);
customElements.define('app-header', AppHeader);
customElements.define('app-rail', AppRail);
customElements.define('case-panel', CasePanel);
customElements.define('case-tabs', CaseTabs);
customElements.define('events-table', EventsTable);
customElements.define('side-nav', SideNav);
customElements.define('status-bar', StatusBar);
customElements.define('task-bar', TaskBar);
customElements.define('dialog-window', DialogWindow);
customElements.define('action-button', ActionButton);
customElements.define('minutes-form', MinutesForm);
customElements.define('disposition-form', DispositionForm);
</script>
</body>
</html>
